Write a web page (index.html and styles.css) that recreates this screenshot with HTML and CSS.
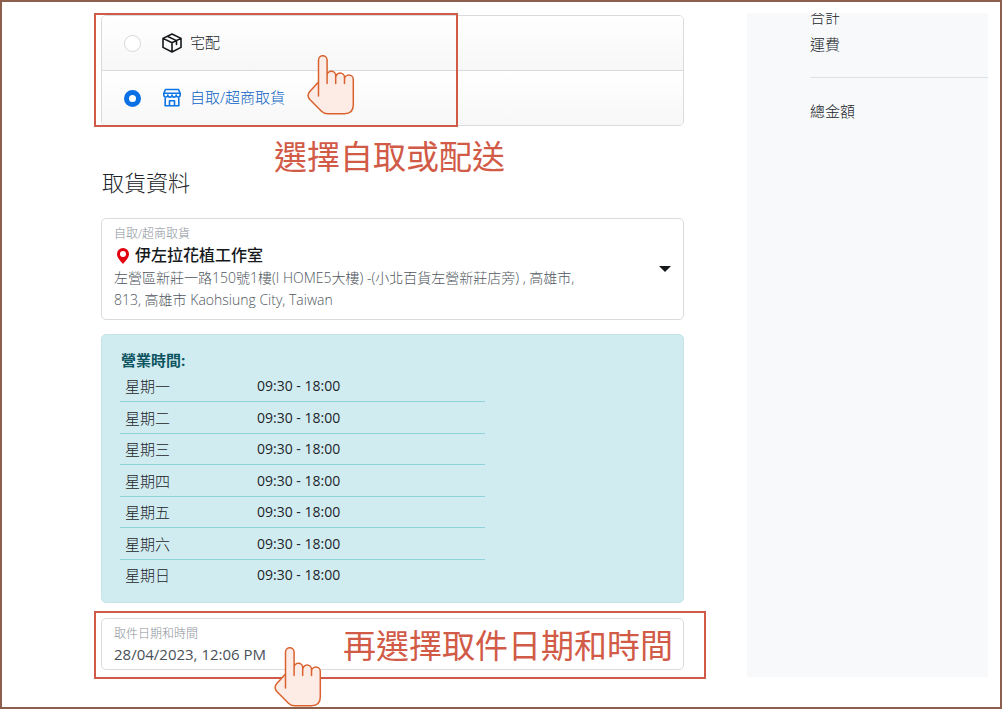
FILE: index.html
```html
<!DOCTYPE html>
<html lang="zh-Hant">
<head>
<meta charset="utf-8">
<meta name="viewport" content="width=device-width, initial-scale=1">
<title>取貨資料</title>
<link rel="stylesheet" href="styles.css">
</head>
<body>
<svg class="sprite" aria-hidden="true">
  <symbol id="hand" viewBox="0 0 48 61">
    <path d="M11.500 27V5a4.300 4.300 0 0 1 8.600 0v15.500a4.300 4.300 0 0 1 8.600 0v2a4.400 4.400 0 0 1 8.800 0v2a4.400 4.400 0 0 1 8.800 0V50q0 8.700-8.800 8.700H20.500q-3.500 0-6-2.500L2.800 44.500q-3.400-4 0-8z" fill="#fdebe6"/>
    <path d="M11.500 41V5a4.300 4.300 0 0 1 8.600 0v23.500M20.100 20.500a4.300 4.300 0 0 1 8.600 0v8M28.700 22.500a4.400 4.400 0 0 1 8.800 0v6M37.500 24.500a4.400 4.400 0 0 1 8.800 0V50q0 8.700-8.800 8.700H20.500q-3.500 0-6-2.500L2.800 44.500q-3.400-4 0-8L11.500 27" fill="none" stroke="#d9622f" stroke-width="1.500" stroke-linecap="round" stroke-linejoin="round"/>
  </symbol>
</svg>
<div class="page">
  <main class="checkout">
    <section class="step">
      <div class="options">
        <label class="option">
          <input class="radio" type="radio" name="delivery">
          <svg class="option-icon" viewBox="0 0 20 20" fill="none" stroke="#16191c" stroke-width="1.600" stroke-linejoin="round" stroke-linecap="round" aria-hidden="true">
            <path d="M10 1 19 5.400V14.400L10 19 1 14.400V5.400zM1 5.400 10 9.800 19 5.400M10 9.800V19M5.300 3.300 14.500 7.600V11.500"/>
          </svg>
          <span class="option-name">宅配</span>
        </label>
        <label class="option option-active">
          <input class="radio" type="radio" name="delivery" checked>
          <svg class="option-icon" viewBox="0 0 20 20" fill="none" stroke="#0b74e5" stroke-width="1.600" stroke-linejoin="round" stroke-linecap="round" aria-hidden="true">
            <path d="M3.500 1.500h13l1.700 3.800v1.700a2 2 0 0 1-4 0 2.100 2.100 0 0 1-4.200 0 2.100 2.100 0 0 1-4.200 0 2 2 0 0 1-4 0V5.300zM1.800 5.300h16.400M3.200 10v7.800h4.300v-5h5v5h4.300V10M7.500 17.800h5"/>
          </svg>
          <span class="option-name">自取/超商取貨</span>
        </label>
      </div>
      <div class="frame frame-options"></div>
      <p class="note note-options">選擇自取或配送</p>
      <svg class="hand hand-options" aria-hidden="true"><use href="#hand"/></svg>
    </section>

    <h2 class="title">取貨資料</h2>

    <button class="store" type="button" aria-haspopup="listbox">
      <span class="store-body">
        <span class="caption">自取/超商取貨</span>
        <span class="store-name">
          <svg class="pin" viewBox="0 0 12 16" aria-hidden="true"><path fill="#e3000f" fill-rule="evenodd" d="M6 0a6 6 0 0 1 6 6c0 3.600-3.500 7-6 10C3.500 13 0 9.600 0 6a6 6 0 0 1 6-6zm0 3a3 3 0 1 0 0 6 3 3 0 0 0 0-6z"/></svg>
          伊左拉花植工作室
        </span>
        <span class="address">左營區新莊一路150號1樓(I HOME5大樓) -(小北百貨左營新莊店旁) , 高雄市, 813, 高雄市 Kaohsiung City, Taiwan</span>
      </span>
      <svg class="caret" viewBox="0 0 12 6" aria-hidden="true"><path fill="#16191c" d="M0 0h12L6 6z"/></svg>
    </button>

    <section class="hours">
      <h3 class="hours-title">營業時間:</h3>
      <table class="hours-table">
        <tbody>
          <tr><th scope="row">星期一</th><td>09:30 - 18:00</td></tr>
          <tr><th scope="row">星期二</th><td>09:30 - 18:00</td></tr>
          <tr><th scope="row">星期三</th><td>09:30 - 18:00</td></tr>
          <tr><th scope="row">星期四</th><td>09:30 - 18:00</td></tr>
          <tr><th scope="row">星期五</th><td>09:30 - 18:00</td></tr>
          <tr><th scope="row">星期六</th><td>09:30 - 18:00</td></tr>
          <tr><th scope="row">星期日</th><td>09:30 - 18:00</td></tr>
        </tbody>
      </table>
    </section>

    <section class="step">
      <div class="field">
        <label class="caption" for="pickup-time">取件日期和時間</label>
        <input class="field-input" id="pickup-time" type="text" value="28/04/2023, 12:06 PM">
      </div>
      <div class="frame frame-time"></div>
      <p class="note note-time">再選擇取件日期和時間</p>
      <svg class="hand hand-time" aria-hidden="true"><use href="#hand"/></svg>
    </section>
  </main>

  <aside class="summary">
    <div class="summary-lines">
      <p>合計</p>
      <p>運費</p>
    </div>
    <p class="summary-total">總金額</p>
  </aside>
</div>
</body>
</html>
```

FILE: styles.css
```css
* {
  box-sizing: border-box;
}

body {
  margin: 0;
  color: #212529;
  background: #fff;
  font: 300 15px/20px "Open Sans", "Noto Sans CJK TC", sans-serif;
}

p,
h2,
h3 {
  margin: 0;
}

.sprite {
  position: absolute;
  width: 0;
  height: 0;
}

.page {
  display: flex;
  gap: 63px;
  min-height: 100vh;
  padding: 11px 12px 30px 99px;
  border: 2px solid #8b5f4b;
}

.checkout {
  flex: 1;
  min-width: 0;
  padding-top: 2px;
}

.step {
  position: relative;
}

.options {
  border: 1px solid #d9dbde;
  border-radius: 5px;
  overflow: hidden;
}

.option {
  display: flex;
  align-items: center;
  height: 54px;
  padding: 0 22px;
  background: linear-gradient(#fff, #f7f7f7);
}

.option + .option {
  height: 55px;
  border-top: 1px solid #d9dbde;
}

.option-active {
  color: #0a62c4;
}

.option-name {
  padding-bottom: 2px;
}

.radio {
  appearance: none;
  width: 17px;
  height: 17px;
  margin: 0 21px 0 0;
  border: 1px solid #d5d7da;
  border-radius: 50%;
  background: #fff;
}

.radio:checked {
  border: 5px solid #0b70e3;
}

.option-icon {
  width: 20px;
  height: 20px;
  margin-right: 8px;
}

.frame {
  position: absolute;
  border: 2px solid #d15b47;
  pointer-events: none;
}

.frame-options {
  top: -2px;
  bottom: -1px;
  left: -7px;
  width: 364px;
}

.frame-time {
  top: -7px;
  right: -22px;
  bottom: -9px;
  left: -7px;
}

.note {
  position: absolute;
  color: #d15b47;
  font-size: 33px;
  font-weight: 400;
  line-height: 34px;
  white-space: nowrap;
}

.note-options {
  top: 125px;
  left: 173px;
}

.note-time {
  top: 11px;
  left: 242px;
}

.hand {
  position: absolute;
  width: 48px;
  height: 61px;
}

.hand-options {
  top: 40px;
  left: 206px;
}

.hand-time {
  top: 29px;
  left: 173px;
}

.title {
  margin: 41px 0 21px;
  padding-left: 1px;
  font-size: 22px;
  font-weight: 300;
  line-height: 30px;
}

.store {
  display: flex;
  align-items: center;
  justify-content: space-between;
  width: 100%;
  padding: 4px 12px 8px 12px;
  border: 1px solid #d9dbde;
  border-radius: 5px;
  background: #fff;
  color: #16191c;
  font: inherit;
  text-align: left;
}

.store-body {
  display: flex;
  flex-direction: column;
  max-width: 464px;
}

.caption {
  color: #8b9299;
  font-size: 12px;
  line-height: 21px;
}

.store-name {
  display: flex;
  align-items: center;
  gap: 6px;
  padding-left: 3px;
  font-size: 16px;
  font-weight: 500;
  line-height: 23px;
}

.pin {
  width: 12px;
  height: 16px;
}

.address {
  color: #4f575e;
  font-size: 14px;
  line-height: 22px;
}

.caret {
  flex: none;
  width: 12px;
  height: 6px;
  margin-top: 4px;
}

.hours {
  margin: 14px 0 15px;
  padding: 14px 18px 12px;
  border: 1px solid #c3e5ea;
  border-radius: 5px;
  background: #d1ecf1;
}

.hours-title {
  padding-left: 1px;
  color: #0c5460;
  font-size: 15px;
  font-weight: 700;
  line-height: 22px;
}

.hours-table {
  width: 67%;
  height: 219px;
  border-collapse: collapse;
}

.hours-table th,
.hours-table td {
  padding: 0 5px;
  font-weight: 300;
  text-align: left;
}

.hours-table th {
  width: 132px;
}

.hours-table td {
  font-size: 14px;
  font-weight: 400;
}

.hours-table tr + tr {
  border-top: 1px solid #8fd3da;
}

.field {
  display: flex;
  flex-direction: column;
  padding: 4px 12px 6px;
  border: 1px solid #d9dbde;
  border-radius: 5px;
}

.field-input {
  width: 100%;
  height: 19px;
  padding: 0;
  border: 0;
  background: none;
  color: #495057;
  font: inherit;
  font-weight: 400;
}

.summary {
  flex: 0 0 241px;
  padding-left: 63px;
  overflow: hidden;
  background: #f8f9fb;
}

.summary-lines {
  margin-top: -9px;
  padding-bottom: 19px;
  border-bottom: 1px solid #dfe2e5;
  line-height: 27px;
}

.summary-total {
  margin-top: 23px;
}
```
